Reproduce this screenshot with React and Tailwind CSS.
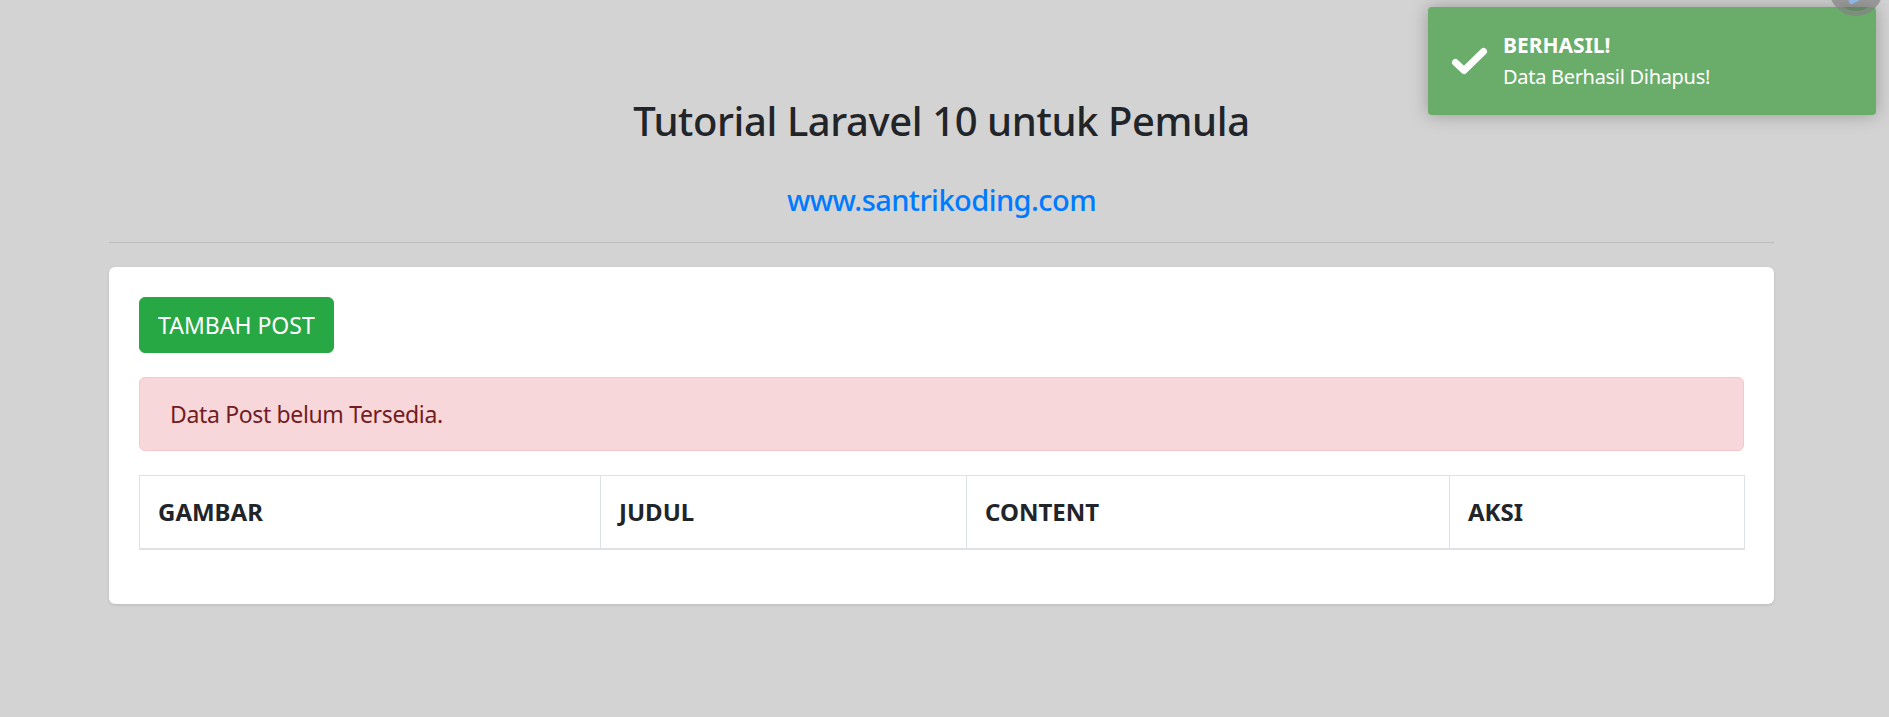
import React from "react";

export default function App() {
  return (
    <div className="relative min-h-[717px] bg-[#d3d3d3] font-['Noto_Sans',sans-serif] text-[#212529] overflow-hidden">
      <div className="ml-[109px] w-[1665px] pt-[96px]">
        <div className="text-center">
          <h3 className="text-[40px] leading-[50.4px] tracking-[-0.4px] font-medium mb-[36px]">Tutorial Laravel 10 untuk Pemula</h3>
          <h5 className="text-[29px] leading-[36px] tracking-[-0.55px] font-medium">
            <a className="text-[#007bff]">www.santrikoding.com</a>
          </h5>
        </div>
        <hr className="mt-[24px] mb-[24px] border-t border-[#bdbdbd]" />
        <div className="bg-white rounded-[6px] shadow-[0_1px_3px_rgba(0,0,0,0.12)] p-[30px]">
          <button className="bg-[#28a745] border border-[#28a745] text-white text-[23px] leading-[36px] px-[18px] py-[9px] rounded-[6px] mb-[24px]">
            TAMBAH POST
          </button>
          <div className="bg-[#f8d7da] border border-[#f5c6cb] text-[#721c24] text-[23px] tracking-[-0.35px] leading-[36px] px-[30px] py-[18px] rounded-[6px] mb-[24px]">
            Data Post belum Tersedia.
          </div>
          <table className="w-full table-fixed border-collapse text-[24px] leading-[36px] mb-[24px]">
            <colgroup>
              <col className="w-[461px]" />
              <col className="w-[366px]" />
              <col className="w-[483px]" />
              <col className="w-[295px]" />
            </colgroup>
            <thead>
              <tr>
                <th className="text-left font-bold p-[18px] border border-[#dee2e6] border-b-2">GAMBAR</th>
                <th className="text-left font-bold p-[18px] border border-[#dee2e6] border-b-2">JUDUL</th>
                <th className="text-left font-bold p-[18px] border border-[#dee2e6] border-b-2">CONTENT</th>
                <th className="text-left font-bold p-[18px] border border-[#dee2e6] border-b-2">AKSI</th>
              </tr>
            </thead>
            <tbody></tbody>
          </table>
        </div>
      </div>

      <div className="absolute top-[7px] left-[1428px] w-[448px] rounded-[4px] bg-[#6aac6a] shadow-[0_0_18px_#999] text-white text-[20px] leading-[31.5px] pl-[75px] pr-[22px] py-[22.5px]">
        <svg className="absolute left-0 top-0" width="75" height="108" viewBox="0 0 75 108">
          <polyline points="27.5,55.5 36,63.5 55.5,44.5" fill="none" stroke="white" strokeWidth="7" strokeLinecap="round" strokeLinejoin="round" />
        </svg>
        <div className="font-bold text-[21px]">BERHASIL!</div>
        <div className="tracking-[-0.3px]">Data Berhasil Dihapus!</div>
      </div>

      <div className="absolute left-[1829px] top-[-38px] w-[54px] h-[54px] rounded-full bg-[rgba(90,90,90,0.45)] border-[5px] border-[rgba(150,150,150,0.5)] overflow-hidden">
        <div className="absolute left-[14px] top-[28px] w-[18px] h-[6px] rounded-full bg-[#8fb6e6] rotate-[-30deg]" />
      </div>
    </div>
  );
}
